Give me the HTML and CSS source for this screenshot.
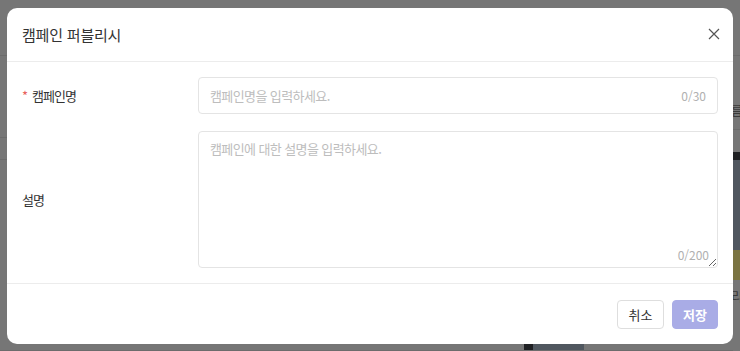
FILE: index.html
```html
<!DOCTYPE html>
<html lang="ko">

<head>
  <meta charset="UTF-8">
  <meta name="viewport" content="width=device-width, initial-scale=1.0">
  <title>캠페인 퍼블리시</title>
  <link rel="stylesheet" href="styles.css">
</head>

<body>
  <div class="page">
    <div class="page-main">
      <div class="main-top"></div>
      <div class="main-row row-a"></div>
      <div class="main-row row-b"></div>
      <div class="main-row row-c"></div>
      <div class="main-row row-d">
        <div class="thumb-small"></div>
      </div>
    </div>
    <div class="page-side">
      <div class="side-top"></div>
      <div class="side-name"><span>이름</span></div>
      <div class="side-gap"></div>
      <div class="thumb-dark"></div>
      <div class="thumb-slate"></div>
      <div class="thumb-olive"></div>
      <div class="side-name side-name-low"><span>시리</span></div>
    </div>
  </div>

  <div class="overlay">
    <div class="modal">
      <div class="modal-header">
        <h1 class="modal-title">캠페인 퍼블리시</h1>
        <button class="modal-close" type="button" aria-label="닫기">
          <svg width="12" height="12" viewBox="0 0 12 12">
            <path d="M1 1 L11 11 M11 1 L1 11" stroke="#555" stroke-width="1.2" fill="none" />
          </svg>
        </button>
      </div>

      <form class="modal-body">
        <div class="form-row">
          <label class="form-label" for="name"><span class="required">*</span>캠페인명</label>
          <div class="input-wrap">
            <input type="text" id="name" placeholder="캠페인명을 입력하세요.">
            <span class="count">0/30</span>
          </div>
        </div>
        <div class="form-row">
          <label class="form-label" for="desc">설명</label>
          <div class="textarea-wrap">
            <textarea id="desc" placeholder="캠페인에 대한 설명을 입력하세요."></textarea>
            <span class="count count-area">0/200</span>
          </div>
        </div>
      </form>

      <div class="modal-footer">
        <button type="button" class="btn">취소</button>
        <button type="button" class="btn btn-primary">저장</button>
      </div>
    </div>
  </div>
</body>

</html>
```

FILE: styles.css
```css
* {
  box-sizing: border-box;
  font-family: "Noto Sans CJK KR", "Noto Sans", sans-serif;
}

body {
  margin: 0;
  width: 740px;
  height: 351px;
  overflow: hidden;
  background-color: #767676;
}

/* page behind the dialog, already dimmed */
.page {
  display: flex;
  height: 351px;
  overflow: hidden;
}

.page-main {
  flex: 1;
  display: flex;
  flex-direction: column;
}

.main-top {
  height: 56px;
  border-bottom: 1px solid #6c6c6c;
}

.main-row {
  border-bottom: 1px solid #6c6c6c;
}

.row-a {
  height: 82px;
}

.row-b {
  height: 22px;
}

.row-c {
  height: 184px;
  border-bottom: none;
}

.row-d {
  flex: 1;
  display: flex;
  padding-left: 524px;
}

.thumb-small {
  width: 60px;
  border-left: 9px solid #1f2023;
  background-color: #50575f;
}

.page-side {
  width: 7px;
  display: flex;
  flex-direction: column;
  overflow: hidden;
}

.side-top {
  height: 56px;
  flex-shrink: 0;
  border-bottom: 1px solid #6c6c6c;
}

.side-name {
  height: 74px;
  flex-shrink: 0;
  display: flex;
  align-items: center;
  border-bottom: 1px solid #6c6c6c;
  font-size: 13px;
  color: #3a3a3a;
  white-space: nowrap;
}

.side-name span {
  margin-left: -14px;
  margin-top: 34px;
}

.side-gap {
  height: 22px;
  flex-shrink: 0;
}

.thumb-dark {
  height: 8px;
  flex-shrink: 0;
  background-color: #1f2023;
}

.thumb-slate {
  height: 90px;
  flex-shrink: 0;
  background-color: #50575f;
}

.thumb-olive {
  height: 30px;
  flex-shrink: 0;
  background-color: #7a7442;
}

.side-name-low {
  height: 30px;
  border-bottom: none;
}

.side-name-low span {
  margin-top: 0;
}

/* dialog */
.overlay {
  position: absolute;
  top: 0;
  left: 0;
  width: 740px;
  height: 351px;
}

.modal {
  position: absolute;
  top: 8px;
  left: 7px;
  width: 726px;
  height: 336px;
  background-color: #fff;
  border-radius: 10px;
  display: flex;
  flex-direction: column;
}

.modal-header {
  display: flex;
  align-items: center;
  justify-content: space-between;
  height: 54px;
  padding: 0 15px;
  border-bottom: 1px solid #ececec;
}

.modal-title {
  margin: 0;
  font-size: 15px;
  font-weight: 400;
  color: #333;
  letter-spacing: -0.2px;
}

.modal-close {
  display: flex;
  border: none;
  background: none;
  padding: 0;
  margin-right: -2px;
  margin-top: -2px;
  cursor: pointer;
}

.modal-body {
  display: flex;
  flex-direction: column;
  gap: 17px;
  padding: 15px;
  margin: 0;
  border-bottom: 1px solid #ececec;
}

.form-row {
  display: grid;
  grid-template-columns: 176px 1fr;
  align-items: center;
}

.form-label {
  font-size: 13px;
  color: #333;
  letter-spacing: -1px;
}

.required {
  color: #e8615c;
  margin-right: 4px;
  letter-spacing: 0;
}

.input-wrap {
  display: flex;
  align-items: center;
  height: 37px;
  padding: 0 11px;
  border: 1px solid #e4e4e4;
  border-radius: 4px;
}

.input-wrap input {
  flex: 1;
  border: none;
  outline: none;
  padding: 0;
  font-size: 13px;
  letter-spacing: -0.6px;
  color: #333;
}

.count {
  font-size: 12px;
  color: #b0b0b0;
}

input::placeholder,
textarea::placeholder {
  color: #bdbdbd;
}

.textarea-wrap {
  position: relative;
  height: 137px;
}

.textarea-wrap textarea {
  display: block;
  width: 100%;
  height: 100%;
  padding: 7px 11px;
  border: 1px solid #e4e4e4;
  border-radius: 4px;
  outline: none;
  resize: vertical;
  font-size: 13px;
  letter-spacing: -0.6px;
  color: #333;
}

.count-area {
  position: absolute;
  right: 9px;
  bottom: 5px;
}

.modal-footer {
  display: flex;
  justify-content: flex-end;
  gap: 8px;
  padding: 16px 15px 0;
}

.btn {
  height: 29px;
  width: 47px;
  padding: 0;
  border: 1px solid #dedede;
  border-radius: 4px;
  background-color: #fff;
  font-size: 13px;
  color: #333;
  cursor: pointer;
}

.btn-primary {
  width: 46px;
  border-color: #a9ace6;
  background-color: #a9ace6;
  color: #fff;
  font-weight: 700;
}
```
